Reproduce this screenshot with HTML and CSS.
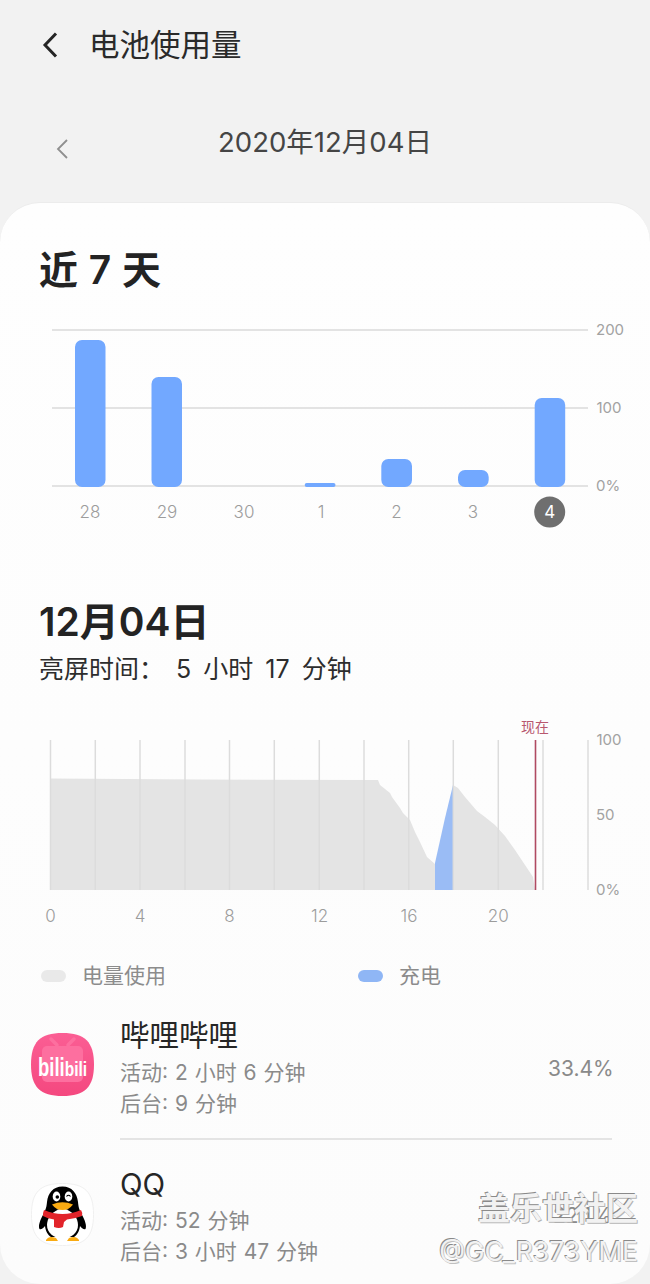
FILE: index.html
```html
<!DOCTYPE html>
<html lang="zh-CN">
<head>
<meta charset="utf-8">
<title>电池使用量</title>
<link rel="stylesheet" href="styles.css">
</head>
<body>
<div class="page">
  <header class="topbar">
    <svg class="back" width="20" height="28" viewBox="0 0 20 28"><path d="M15 2.500 L4 14 L15 25.500"/></svg>
    <h1 class="title">电池使用量</h1>
  </header>
  <div class="date-row">
    <svg class="prev" width="14" height="22" viewBox="0 0 14 22"><path d="M12 2 L3 11 L12 20"/></svg>
    <div class="date">2020年12月04日</div>
  </div>
  <main class="card">
    <h2 class="heading heading-first">近 7 天</h2>
    <svg class="chart chart-week" width="650" height="220" viewBox="0 315 650 220">
      <g class="grid">
        <line x1="52" y1="330" x2="588" y2="330"/>
        <line x1="52" y1="408" x2="588" y2="408"/>
        <line x1="52" y1="486" x2="588" y2="486"/>
      </g>
      <g class="bars">
        <path d="M75 347a7 7 0 0 1 7-7h16.500a7 7 0 0 1 7 7v133a7 7 0 0 1-7 7h-16.500a7 7 0 0 1-7-7z"/>
        <path d="M151.500 384a7 7 0 0 1 7-7h16.500a7 7 0 0 1 7 7v96a7 7 0 0 1-7 7h-16.500a7 7 0 0 1-7-7z"/>
        <rect x="304.700" y="483" width="30.800" height="4" rx="2"/>
        <rect x="381.300" y="459" width="30.700" height="28" rx="7"/>
        <rect x="458" y="470" width="30.700" height="17" rx="7"/>
        <rect x="534.700" y="398" width="30.500" height="89" rx="7"/>
      </g>
      <g class="axis-x">
        <text x="90" y="518">28</text>
        <text x="167" y="518">29</text>
        <text x="244" y="518">30</text>
        <text x="321" y="518">1</text>
        <text x="396.500" y="518">2</text>
        <text x="473" y="518">3</text>
      </g>
      <circle class="today" cx="549.700" cy="512" r="15.500"/>
      <text class="today-label" x="549.700" y="518">4</text>
      <g class="axis-y">
        <text x="596" y="335">200</text>
        <text x="596.500" y="413">100</text>
        <text x="596" y="491">0%</text>
      </g>
    </svg>

    <h2 class="heading heading-day">12月04日</h2>
    <p class="screen-time">亮屏时间： 5 小时 17 分钟</p>

    <svg class="chart chart-day" width="650" height="215" viewBox="0 715 650 215">
      <path class="area" d="M50 778.500 L200 779.500 L378 780 L380 785 L390 793 L392 797 L400 808 L403 813 L410 820 L415 832 L420 842 L427 857 L435 864 L435 890 L50 890Z"/>
      <path class="area" d="M453 785 L458 788 L465 797 L477 811 L485 817 L495 825 L505 836 L515 850 L525 865 L533 877 L535 890 L453 890Z"/>
      <path class="charge" d="M435 863 L437 854 L445 818 L453 785 L453 890 L435 890Z"/>
      <g class="vgrid">
        <line x1="50.500" y1="740" x2="50.500" y2="890"/>
        <line x1="95.300" y1="740" x2="95.300" y2="890"/>
        <line x1="140" y1="740" x2="140" y2="890"/>
        <line x1="185" y1="740" x2="185" y2="890"/>
        <line x1="229.500" y1="740" x2="229.500" y2="890"/>
        <line x1="274.300" y1="740" x2="274.300" y2="890"/>
        <line x1="319.300" y1="740" x2="319.300" y2="890"/>
        <line x1="364" y1="740" x2="364" y2="890"/>
        <line x1="408.700" y1="740" x2="408.700" y2="890"/>
        <line x1="453.300" y1="740" x2="453.300" y2="890"/>
        <line x1="498.300" y1="740" x2="498.300" y2="890"/>
        <line x1="543" y1="740" x2="543" y2="890"/>
        <line x1="588" y1="740" x2="588" y2="890"/>
      </g>
      <line class="now-line" x1="535.500" y1="740" x2="535.500" y2="890"/>
      <text class="now-label" x="535" y="732">现在</text>
      <g class="axis-x">
        <text x="50.500" y="922">0</text>
        <text x="140" y="922">4</text>
        <text x="229.500" y="922">8</text>
        <text x="319.500" y="922">12</text>
        <text x="409" y="922">16</text>
        <text x="498.300" y="922">20</text>
      </g>
      <g class="axis-y">
        <text x="596.500" y="745">100</text>
        <text x="596" y="820">50</text>
        <text x="596" y="895">0%</text>
      </g>
    </svg>

    <div class="legend">
      <span class="legend-item legend-use"><i class="pill pill-use"></i>电量使用</span>
      <span class="legend-item"><i class="pill pill-charge"></i>充电</span>
    </div>

    <ul class="apps">
      <li class="app app-first">
        <svg class="app-icon" width="63" height="63" viewBox="0 0 63 63">
          <defs>
            <linearGradient id="pink" x1="0" y1="0" x2="0" y2="1">
              <stop offset="0" stop-color="#fb5e94"/>
              <stop offset="1" stop-color="#f4487f"/>
            </linearGradient>
          </defs>
          <path fill="url(#pink)" d="M31.500 0C54 0 63 9 63 31.500S54 63 31.500 63S0 54 0 31.500S9 0 31.500 0Z"/>
          <rect class="tv" x="11" y="13" width="41" height="36" rx="5"/>
          <path class="tv-antenna" d="M20 6 L26 12 M43 6 L37 12"/>
          <text class="bili" transform="translate(7 43) scale(.74 1)"><tspan class="bili-a">bili</tspan><tspan class="bili-b">bili</tspan></text>
        </svg>
        <div class="app-body">
          <div class="app-name">哔哩哔哩</div>
          <div class="app-line">活动: 2 小时 6 分钟</div>
          <div class="app-line">后台: 9 分钟</div>
        </div>
        <div class="percent">33.4%</div>
      </li>
      <li class="app app-second">
        <svg class="app-icon" width="63" height="63" viewBox="0 0 63 63">
          <path fill="#ffffff" stroke="#f0f0f0" d="M31.500 .5C54 .5 62.500 9 62.500 31.500S54 62.500 31.500 62.500S.5 54 .5 31.500S9 .5 31.500 .5Z"/>
          <path fill="#000" d="M31.500 3.500C41 3.500 46 10 47 19C47.500 24 48 26 50.500 31C54 37 56 43 54.500 46C53 47 50.500 45 49 43C48.500 48 46 52 43 54L20 54C17 52 14.500 48 14 43C12.500 45 10 47 8.500 46C7 43 9 37 12.500 31C15 26 15.500 24 16 19C17 10 22 3.500 31.500 3.500Z"/>
          <path fill="#fff" d="M31.500 25C42 28 47 35 47 42C47 50 40 55.500 31.500 55.500S16 50 16 42C16 35 21 28 31.500 25Z"/>
          <ellipse cx="25.500" cy="13.500" rx="3.800" ry="5" fill="#fff"/>
          <ellipse cx="37.500" cy="13.500" rx="3.800" ry="5" fill="#fff"/>
          <circle cx="26.300" cy="14" r="1.800" fill="#000"/>
          <path d="M35.500 13.500 Q37.500 11 39.500 13.500" fill="none" stroke="#000" stroke-width="1.200"/>
          <path fill="#f9ab12" d="M21 21.500Q31.500 17 42 21.500Q38 27 31.500 27T21 21.500Z"/>
          <path fill="#e2242a" d="M13 27Q31.500 35 50 27Q52 30 51 33Q43 36 36 36.500L33 39L32 44Q28 46 23 44L23 36.500Q17 36 12 33Q12 29 13 27Z"/>
          <path fill="#f9ab12" d="M15 57Q18 52 25 55L27 58L15 58Z M48 57Q45 52 38 55L36 58L48 58Z"/>
        </svg>
        <div class="app-body">
          <div class="app-name app-name-short">QQ</div>
          <div class="app-line">活动: 52 分钟</div>
          <div class="app-line">后台: 3 小时 47 分钟</div>
        </div>
        <div class="percent percent-low">22.1%</div>
      </li>
    </ul>
  </main>
  <div class="watermark">
    <div class="wm-main">盖乐世社区</div>
    <div class="wm-sub">@GC_R373YME</div>
  </div>
</div>
</body>
</html>
```
FILE: styles.css
```css
* { box-sizing: border-box; }
html, body { margin: 0; padding: 0; }
body {
  background: #f2f2f2;
  font-family: Inter, "Noto Sans CJK SC", sans-serif;
  color: #252525;
}
.page {
  position: relative;
  width: 650px;
  height: 1284px;
  overflow: hidden;
  background: #f2f2f2;
}
.topbar {
  height: 90px;
  display: flex;
  align-items: center;
  gap: 28px;
  padding-left: 41px;
}
.back { fill: none; stroke: #252525; stroke-width: 3; }
.title { margin: 0; font-size: 30.500px; font-weight: 400; line-height: 40px; color: #2a2a2a; }
.date-row {
  position: relative;
  height: 112px;
  padding-top: 32px;
  text-align: center;
}
.date { font-size: 27.500px; line-height: 40px; color: #454545; }
.prev {
  position: absolute;
  left: 55px;
  top: 48px;
  fill: none;
  stroke: #8f8f8f;
  stroke-width: 1.800;
}
.card {
  height: 1082px;
  background: linear-gradient(#fefefe, #fcfcfc);
  border-top: 1px solid #ececec;
  border-radius: 40px;
}
.heading {
  margin: 0;
  padding-left: 39px;
  font-size: 39px;
  font-weight: 600;
  line-height: 50px;
  color: #232323;
}
.heading-first { margin-top: 42px; word-spacing: 1px; }
.chart { display: block; }
.chart-week { margin-top: 20px; }
.heading-day { margin-top: 62px; }
.screen-time {
  margin: 4px 0 0;
  padding-left: 39px;
  font-size: 25px;
  line-height: 36px;
  word-spacing: 5px;
  color: #2d2d2d;
}
.chart-day { margin-top: 28px; }
.grid line { stroke: #e3e3e3; stroke-width: 2; }
.bars { fill: #72a8ff; }
.axis-x text {
  font-size: 17px;
  font-weight: 300;
  fill: #9c9c9c;
  text-anchor: middle;
}
.axis-y text { font-size: 15px; fill: #a2a2a2; }
.today { fill: #6f6f6f; }
.today-label { font-size: 17px; fill: #ffffff; text-anchor: middle; }
.area { fill: #e4e4e4; }
.charge { fill: #9abcf5; }
.vgrid line { stroke: #dcdcdc; stroke-width: 1.500; }
.now-line { stroke: #b04a62; stroke-width: 1.600; }
.now-label { font-size: 14px; fill: #b8586f; text-anchor: middle; }
.legend {
  display: flex;
  height: 30px;
  margin-top: 31px;
  padding-left: 41px;
  font-size: 21px;
  line-height: 30px;
  color: #8c8c8c;
}
.legend-item { display: flex; align-items: center; gap: 16px; }
.legend-use { width: 317px; }
.pill { width: 25px; height: 12px; border-radius: 6px; }
.pill-use { background: #e9e9e9; }
.pill-charge { background: #8fb6f5; }
.apps { list-style: none; margin: 19px 0 0; padding: 0; }
.app { display: flex; align-items: center; margin-left: 31px; }
.app-first { position: relative; padding: 3px 0 21px; }
.app-second { padding-top: 23px; }
.app-icon { flex: none; align-self: flex-start; margin-top: 20px; }
.app-body { flex: 1; margin-left: 26px; }
.app-name { font-size: 29.500px; line-height: 44px; color: #262626; }
.app-name-short { line-height: 42px; }
.app-line { font-size: 21px; line-height: 31px; word-spacing: 1px; color: #8a8a8a; }
.app-first::after {
  content: "";
  position: absolute;
  left: 89px;
  right: 38px;
  bottom: 0;
  height: 2px;
  background: #e4e4e4;
}
.percent { width: 102px; padding: 0 38px 0 0; font-size: 21px; text-align: right; color: #8a8a8a; white-space: nowrap; }
.app-first .percent { margin-top: 4px; }
.percent-low { margin-top: 0; }
.tv { fill: #fd6f9f; }
.tv-antenna { stroke: #fd6f9f; stroke-width: 3.500; stroke-linecap: round; fill: none; }
.bili {
  font-family: "Liberation Sans", sans-serif;
  font-weight: 700;
  fill: #ffffff;
}
.bili-a { font-size: 25px; }
.bili-b { font-size: 21px; }
.watermark {
  position: absolute;
  right: 12px;
  top: 1191px;
  text-align: right;
  color: #f2f2f2;
}
.wm-main {
  font-size: 32px;
  line-height: 36px;
  font-weight: 700;
  text-shadow: -1px -1px 0 #8a8a8a, 1px 1px 0 #b5b5b5;
}
.wm-sub {
  margin-top: 7px;
  font-size: 26.500px;
  line-height: 34px;
  text-shadow: -1px -1px 0 #8a8a8a, 1px 1px 0 #c0c0c0;
}
```
